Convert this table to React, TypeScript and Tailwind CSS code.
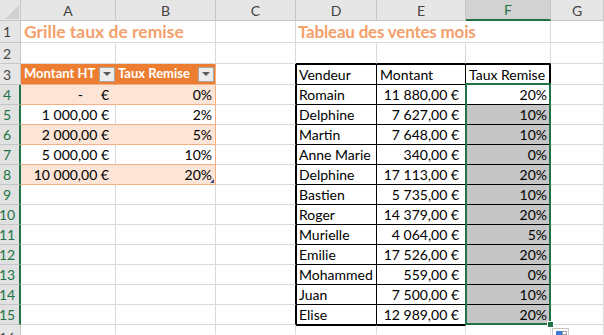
import React from 'react';

const grille: [string, string][] = [
  ['', '0%'],
  ['1 000,00 €', '2%'],
  ['2 000,00 €', '5%'],
  ['5 000,00 €', '10%'],
  ['10 000,00 €', '20%'],
];

const ventes: [string, string, string][] = [
  ['Romain', '11 880,00 €', '20%'],
  ['Delphine', '7 627,00 €', '10%'],
  ['Martin', '7 648,00 €', '10%'],
  ['Anne Marie', '340,00 €', '0%'],
  ['Delphine', '17 113,00 €', '20%'],
  ['Bastien', '5 735,00 €', '10%'],
  ['Roger', '14 379,00 €', '20%'],
  ['Murielle', '4 064,00 €', '5%'],
  ['Emilie', '17 526,00 €', '20%'],
  ['Mohammed', '559,00 €', '0%'],
  ['Juan', '7 500,00 €', '10%'],
  ['Elise', '12 989,00 €', '20%'],
];

const letters = ['A', 'B', 'C', 'D', 'E', 'F', 'G'];

function Cell({ right = 'border-r-[#dadada]', bottom = 'border-b-[#dadada]', className = '', children }: {
  right?: string;
  bottom?: string;
  className?: string;
  children?: React.ReactNode;
}) {
  return (
    <div className={`relative flex items-center whitespace-nowrap border-r border-b ${right} ${bottom} ${className}`}>
      {children}
    </div>
  );
}

function FilterButton() {
  return (
    <span className="ml-auto flex h-[15px] w-[16px] shrink-0 items-center justify-center border border-[#a6a6a6] bg-[#ececec]">
      <span className="h-0 w-0 border-l-[4px] border-r-[4px] border-t-[4px] border-l-transparent border-r-transparent border-t-[#5a5a5a]" />
    </span>
  );
}

function RowHead({ n }: { n: number }) {
  const selected = n >= 4 && n <= 15;
  if (n === 16) {
    return (
      <div className="flex items-start justify-center overflow-hidden border-r border-r-[#c6c6c6] bg-[#e6e6e6] pr-[6px] pt-[6px] text-[14px] leading-none text-[#444]">
        16
      </div>
    );
  }
  return selected ? (
    <div className="flex items-center justify-center border-b border-r-2 border-b-[#c6c6c6] border-r-[#217346] bg-[#e1e1e1] pr-[5px] text-[14px] text-[#217346]">
      {n}
    </div>
  ) : (
    <div className="flex items-center justify-center border-b border-r border-b-[#c6c6c6] border-r-[#c6c6c6] bg-[#e6e6e6] pr-[6px] text-[14px] text-[#444]">
      {n}
    </div>
  );
}

function renderRow(r: number) {
  const cells: React.ReactNode[] = [<RowHead key="h" n={r} />];

  if (r === 1) {
    cells.push(
      <Cell key="A" right="border-r-transparent" className="z-10 overflow-visible pl-[3px] pt-[1px]">
        <span className="text-[17.5px] font-bold text-[#f4a06b]">Grille taux de remise</span>
      </Cell>,
      <Cell key="B" />,
      <Cell key="C" />,
      <Cell key="D" right="border-r-transparent" className="z-10 overflow-visible pl-[2px] pt-[1px]">
        <span className="text-[17px] font-bold tracking-[-0.2px] text-[#f4a06b]">Tableau des ventes mois</span>
      </Cell>,
      <Cell key="E" right="border-r-transparent" />,
      <Cell key="F" />,
      <Cell key="G" />,
    );
    return cells;
  }

  if (r === 2) {
    cells.push(
      <Cell key="A" />,
      <Cell key="B" />,
      <Cell key="C" />,
      <Cell key="D" bottom="border-b-black" />,
      <Cell key="E" bottom="border-b-black" />,
      <Cell key="F" bottom="border-b-black" />,
      <Cell key="G" />,
    );
    return cells;
  }

  if (r === 3) {
    cells.push(
      <Cell key="A" right="border-r-[#ed7d31]" bottom="border-b-[#f4b084]" className="bg-[#ed7d31] pl-[3px] text-[13px] font-bold text-white">
        Montant HT
        <FilterButton />
      </Cell>,
      <Cell key="B" right="border-r-[#f4b084]" bottom="border-b-[#f4b084]" className="bg-[#ed7d31] pl-[2px] pr-[1px] text-[13px] font-bold text-white">
        Taux Remise
        <FilterButton />
      </Cell>,
      <Cell key="C" right="border-r-black" />,
      <Cell key="D" right="border-r-black" bottom="border-b-black" className="border-l border-t border-l-black border-t-black pl-[2px]">
        Vendeur
      </Cell>,
      <Cell key="E" right="border-r-black" bottom="border-b-black" className="border-t border-t-black pl-[3px]">
        Montant
      </Cell>,
      <Cell key="F" right="border-r-black" bottom="border-b-black" className="border-r-2 border-t border-t-black pl-[3px]">
        Taux Remise
      </Cell>,
      <Cell key="G" />,
    );
    return cells;
  }

  if (r === 16) {
    cells.push(
      <Cell key="A" bottom="border-b-transparent" />,
      <Cell key="B" bottom="border-b-transparent" />,
      <Cell key="C" bottom="border-b-transparent" />,
      <Cell key="D" bottom="border-b-transparent" className="border-t border-t-black" />,
      <Cell key="E" bottom="border-b-transparent" className="border-t border-t-black" />,
      <Cell key="F" bottom="border-b-transparent" />,
      <Cell key="G" bottom="border-b-transparent" />,
    );
    return cells;
  }

  // rows 4..15
  const g = r - 4 < grille.length ? grille[r - 4] : null;
  if (g) {
    const banded = r % 2 === 0;
    cells.push(
      <Cell
        key="A"
        right={banded ? 'border-r-[#fce4d6]' : 'border-r-[#dadada]'}
        bottom="border-b-[#f4b084]"
        className={`justify-end pr-[6px] ${banded ? 'bg-[#fce4d6]' : ''}`}
      >
        {g[0] === '' ? (
          <>
            <span className="mr-[18px]">-</span>
            <span>€</span>
          </>
        ) : (
          g[0]
        )}
      </Cell>,
      <Cell
        key="B"
        right="border-r-[#f4b084]"
        bottom="border-b-[#f4b084]"
        className={`justify-end pr-[3px] ${banded ? 'bg-[#fce4d6]' : ''}`}
      >
        {g[1]}
        {r === 8 && (
          <svg className="absolute bottom-[1px] right-[1px]" width="4" height="4" viewBox="0 0 4 4">
            <polygon points="4,0 4,4 0,4" fill="#3b4a8c" />
          </svg>
        )}
      </Cell>,
    );
  } else {
    cells.push(<Cell key="A" />, <Cell key="B" />);
  }

  const v = ventes[r - 4];
  cells.push(
    <Cell key="C" right="border-r-black" />,
    <Cell key="D" right="border-r-black" bottom="border-b-black" className="border-l border-l-black pl-[2px]">
      {v[0]}
    </Cell>,
    <Cell key="E" right="border-r-black" bottom="border-b-black" className="justify-end pr-[6px]">
      {v[1]}
    </Cell>,
    <Cell key="F" right="border-r-black" bottom="border-b-black" className={`justify-end border-r-2 pr-[2px] ${r >= 5 ? 'bg-[#c6c6c6]' : ''}`}>
      {v[2]}
    </Cell>,
    <Cell key="G" />,
  );
  return cells;
}

export default function App() {
  const rows = Array.from({ length: 16 }, (_, i) => i + 1);

  return (
    <div className="relative h-[335px] w-[604px] overflow-hidden bg-white font-[Lato,'Liberation_Sans',sans-serif] text-[14px] text-black">
      <div className="grid grid-cols-[21px_95px_100px_80px_81px_89px_85px_53px] grid-rows-[21px_22px_21px_21px_repeat(12,20px)_10px]">
        {/* column headers */}
        <div className="flex items-end justify-end border-b border-r border-[#c6c6c6] bg-[#e6e6e6] pb-[1px] pr-[1px]">
          <svg width="14" height="14" viewBox="0 0 14 14">
            <polygon points="14,0 14,14 0,14" fill="#d0d0d0" />
          </svg>
        </div>
        {letters.map((l) =>
          l === 'F' ? (
            <div key={l} className="flex items-center justify-center border-b-2 border-r border-b-[#217346] border-r-[#c6c6c6] bg-[#d2d2d2] text-[14px] text-[#217346]">
              {l}
            </div>
          ) : (
            <div key={l} className="flex items-center justify-center border-b border-r border-[#c6c6c6] bg-[#e6e6e6] text-[14px] text-[#444]">
              {l}
            </div>
          ),
        )}

        {rows.map((r) => (
          <React.Fragment key={r}>{renderRow(r)}</React.Fragment>
        ))}
      </div>

      {/* selection F4:F15 */}
      <div className="pointer-events-none absolute left-[465px] top-[83px] h-[242px] w-[86px] border-2 border-[#217346]" />
      <div className="absolute left-[547px] top-[321px] h-[7px] w-[7px] border border-white bg-[#217346]" />

      {/* quick analysis */}
      <div className="absolute left-[552px] top-[328px] flex h-[10px] w-[17px] items-start border border-[#c6c6c6] bg-white pl-[3px] pt-[2px]">
        <span className="h-[4px] w-[6px] bg-[#3c78d8]" />
        <span className="h-[4px] w-[5px] border border-[#a0a0a0] bg-white" />
      </div>
    </div>
  );
}
